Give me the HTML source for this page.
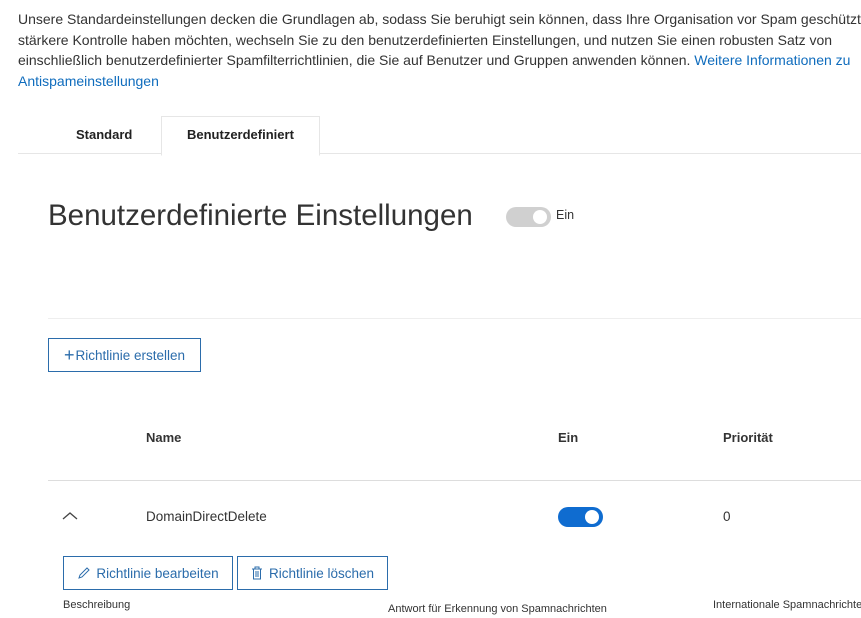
<!DOCTYPE html>
<html><head><style>
html,body{margin:0;width:861px;height:618px;overflow:hidden}
body{background:#fff;font-family:"Liberation Sans",sans-serif;color:#333}
#w{position:relative;width:861px;height:618px;overflow:hidden}
.a{position:absolute;white-space:nowrap}
.intro{left:18px;top:9px;font-size:14px;line-height:20.7px;color:#333}
.link{color:#0f6cbd}
.btn{position:absolute;border:1px solid #2b6cab;color:#2b6cab;font-size:13.5px;box-sizing:border-box;display:flex;align-items:center;justify-content:center;background:#fff}
</style></head><body><div id="w">
<div class="a intro">Unsere Standardeinstellungen decken die Grundlagen ab, sodass Sie beruhigt sein können, dass Ihre Organisation vor Spam geschützt ist.<br>stärkere Kontrolle haben möchten, wechseln Sie zu den benutzerdefinierten Einstellungen, und nutzen Sie einen robusten Satz von<br>einschließlich benutzerdefinierter Spamfilterrichtlinien, die Sie auf Benutzer und Gruppen anwenden können. <span class="link">Weitere Informationen zu</span><br><span class="link">Antispameinstellungen</span></div>
<div class="a" style="left:18px;top:153px;width:843px;border-top:1px solid #e6e6e6"></div>
<div class="a" style="left:76px;top:127px;font-size:13px;font-weight:bold;color:#222">Standard</div>
<div class="a" style="left:161px;top:116px;width:157px;height:38px;border:1px solid #e6e6e6;border-bottom:1px solid #fff;background:#fff"></div>
<div class="a" style="left:187px;top:127px;font-size:13px;font-weight:bold;color:#222">Benutzerdefiniert</div>
<div class="a" style="left:48px;top:199px;font-size:29.5px;color:#333">Benutzerdefinierte Einstellungen</div>
<div class="a" style="left:506px;top:207px;width:45px;height:20px;border-radius:10px;background:#d0d0d0"></div>
<div class="a" style="left:533px;top:210px;width:14px;height:14px;border-radius:7px;background:#fff"></div>
<div class="a" style="left:556px;top:208px;font-size:12.5px;color:#333">Ein</div>
<div class="a" style="left:48px;top:318px;width:813px;border-top:1px solid #eee"></div>
<div class="btn" style="left:48px;top:338px;width:153px;height:34px"><span style="font-size:18px;margin-right:1px;font-weight:300">+</span>Richtlinie erstellen</div>
<div class="a" style="left:146px;top:430px;font-size:13px;font-weight:bold;color:#333">Name</div>
<div class="a" style="left:558px;top:430px;font-size:13px;font-weight:bold;color:#333">Ein</div>
<div class="a" style="left:723px;top:430px;font-size:13px;font-weight:bold;color:#333">Priorität</div>
<div class="a" style="left:48px;top:480px;width:813px;border-top:1px solid #ddd"></div>
<svg class="a" style="left:62px;top:511px" width="16" height="10"><path d="M1 8 L8 2 L15 8" fill="none" stroke="#444" stroke-width="1.3"/></svg>
<div class="a" style="left:146px;top:509px;font-size:13.5px;color:#333">DomainDirectDelete</div>
<div class="a" style="left:558px;top:507px;width:45px;height:20px;border-radius:10px;background:#0f6cd0"></div>
<div class="a" style="left:585px;top:510px;width:14px;height:14px;border-radius:7px;background:#fff"></div>
<div class="a" style="left:723px;top:509px;font-size:13.5px;color:#333">0</div>
<div class="btn" style="left:63px;top:556px;width:170px;height:34px"><svg width="14" height="14" style="margin-right:5px"><path d="M2 12 L3 9 L10 2 L12 4 L5 11 Z" fill="none" stroke="#2b6cab" stroke-width="1"/></svg>Richtlinie bearbeiten</div>
<div class="btn" style="left:237px;top:556px;width:151px;height:34px"><svg width="12" height="14" style="margin-right:6px"><path d="M1 3 H11 M4 3 V1 H8 V3 M2.5 3 V13 H9.5 V3 M5 5 V11 M7 5 V11" fill="none" stroke="#2b6cab" stroke-width="1"/></svg>Richtlinie löschen</div>
<div class="a" style="left:63px;top:599px;font-size:11px;color:#333">Beschreibung</div>
<div class="a" style="left:388px;top:603px;font-size:11px;color:#333">Antwort für Erkennung von Spamnachrichten</div>
<div class="a" style="left:713px;top:599px;font-size:11px;color:#333">Internationale Spamnachrichten</div>
</div></body></html>
